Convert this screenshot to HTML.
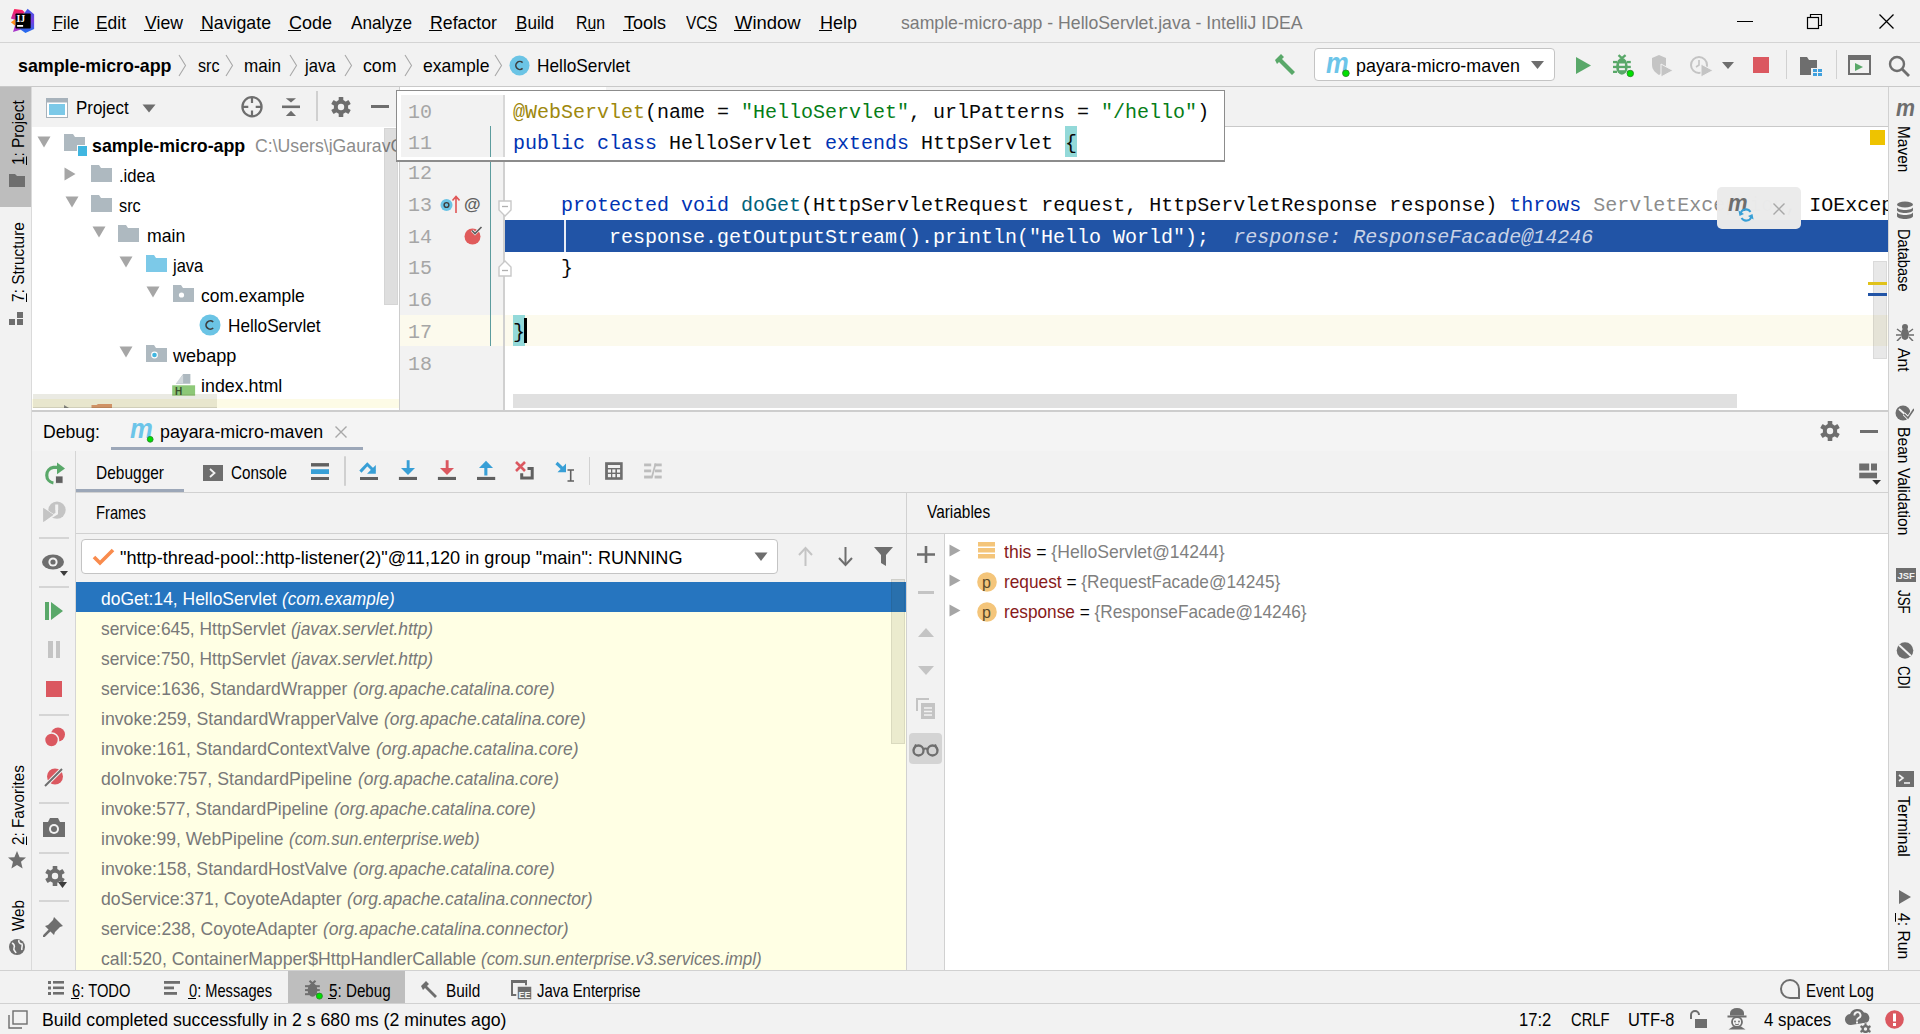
<!DOCTYPE html><html><head><meta charset="utf-8"><style>
*{margin:0;padding:0;box-sizing:border-box}
html,body{width:1920px;height:1034px;overflow:hidden;background:#f2f2f2;position:relative}
body>div,body>svg{position:absolute}
.t{position:absolute;white-space:pre;font-family:"Liberation Sans",sans-serif}
.c{position:absolute;white-space:pre;font-family:"Liberation Mono",monospace;font-size:20px;line-height:20px;color:#080808}
u{text-decoration:underline;text-underline-offset:2px;text-decoration-thickness:1px}
</style></head><body><div style="left:0px;top:0px;width:1920px;height:42px;background:#f2f2f2;"></div>
<div style="left:0px;top:42px;width:1920px;height:1px;background:#d4d4d4;"></div>
<div style="left:0px;top:86px;width:1920px;height:1px;background:#c9c9c9;"></div>
<div style="left:0px;top:87px;width:31px;height:883px;background:#f2f2f2;"></div>
<div style="left:31px;top:87px;width:1px;height:883px;background:#dadada;"></div>
<div style="left:0px;top:87px;width:31px;height:120px;background:#bdbdbd;"></div>
<div style="left:32px;top:87px;width:367px;height:40px;background:#f2f2f2;"></div>
<div style="left:32px;top:127px;width:367px;height:283px;background:#ffffff;"></div>
<div style="left:399px;top:87px;width:1px;height:323px;background:#cdcdcd;"></div>
<div style="left:400px;top:87px;width:1489px;height:323px;background:#ffffff;"></div>
<div style="left:606px;top:87px;width:1283px;height:39px;background:#f2f2f2;"></div>
<div style="left:606px;top:126px;width:1283px;height:1px;background:#c9c9c9;"></div>
<div style="left:1889px;top:87px;width:31px;height:883px;background:#f2f2f2;"></div>
<div style="left:1888px;top:87px;width:1px;height:883px;background:#d1d1d1;"></div>
<div style="left:32px;top:412px;width:1857px;height:558px;background:#f2f2f2;"></div>
<div style="left:32px;top:412px;width:1857px;height:39px;background:#f4f4f4;"></div>
<div style="left:32px;top:410px;width:1857px;height:2px;background:#cdcdcd;"></div>
<div style="left:0px;top:1003px;width:1920px;height:1px;background:#d1d1d1;"></div>
<div style="left:0px;top:970px;width:1920px;height:1px;background:#d1d1d1;"></div>
<div style="left:1888px;top:87px;width:1px;height:883px;background:#d1d1d1;"></div>
<svg style="position:absolute;left:0px;top:0px;" width="40" height="40" viewBox="0 0 40 40">
<defs><linearGradient id="lgb" x1="0" y1="0" x2="0" y2="1"><stop offset="0" stop-color="#3c5be8"/><stop offset="0.5" stop-color="#7a3fe0"/><stop offset="1" stop-color="#1b6ff0"/></linearGradient>
<linearGradient id="lgp" x1="0" y1="0" x2="0" y2="1"><stop offset="0" stop-color="#ff1d5a"/><stop offset="1" stop-color="#c02fa8"/></linearGradient></defs>
<polygon points="14.3,9 22.3,10 24.8,12.4 15.5,20 10.9,18.6" fill="url(#lgp)"/>
<polygon points="10.9,22.3 15.5,19 15.5,26" fill="#ff8a1a"/>
<polygon points="13,31.9 15.2,25 21.1,29.5" fill="#a633c9"/>
<polygon points="27.6,8.7 34.1,14.3 34.1,29.1 25.4,32.9 19,28.5 24.8,12.4" fill="url(#lgb)"/>
<rect x="15.5" y="13.4" width="15.2" height="15.1" rx="0.8" fill="#000"/>
<rect x="17.1" y="25" width="6" height="1.8" fill="#fff"/>
<text x="16.6" y="22" font-family="Liberation Serif" font-weight="bold" font-size="9.6" fill="#fff" textLength="8.6" lengthAdjust="spacingAndGlyphs">IJ</text>
</svg>
<div class="t" style="left:52.50px;top:12.91px;font-size:19px;line-height:19px;color:#000;transform:scaleX(0.8658);transform-origin:0 0;">File</div>
<div style="left:51.5px;top:29.9px;width:10.0px;height:1.2px;background:#000;"></div>
<div class="t" style="left:96.00px;top:12.91px;font-size:19px;line-height:19px;color:#000;transform:scaleX(0.9164);transform-origin:0 0;">Edit</div>
<div style="left:95.0px;top:29.9px;width:11.6px;height:1.2px;background:#000;"></div>
<div class="t" style="left:145.00px;top:12.91px;font-size:19px;line-height:19px;color:#000;transform:scaleX(0.9294);transform-origin:0 0;">View</div>
<div style="left:144.0px;top:29.9px;width:11.8px;height:1.2px;background:#000;"></div>
<div class="t" style="left:201.00px;top:12.91px;font-size:19px;line-height:19px;color:#000;transform:scaleX(0.9334);transform-origin:0 0;">Navigate</div>
<div style="left:200.0px;top:29.9px;width:12.8px;height:1.2px;background:#000;"></div>
<div class="t" style="left:289.00px;top:12.91px;font-size:19px;line-height:19px;color:#000;transform:scaleX(0.9465);transform-origin:0 0;">Code</div>
<div style="left:288.0px;top:29.9px;width:13.0px;height:1.2px;background:#000;"></div>
<div class="t" style="left:351.00px;top:12.91px;font-size:19px;line-height:19px;color:#000;transform:scaleX(0.9023);transform-origin:0 0;">Analyze</div>
<div style="left:392.9px;top:29.9px;width:8.6px;height:1.2px;background:#000;"></div>
<div class="t" style="left:430.00px;top:12.91px;font-size:19px;line-height:19px;color:#000;transform:scaleX(0.9331);transform-origin:0 0;">Refactor</div>
<div style="left:429.0px;top:29.9px;width:12.8px;height:1.2px;background:#000;"></div>
<div class="t" style="left:516.00px;top:12.91px;font-size:19px;line-height:19px;color:#000;transform:scaleX(0.8993);transform-origin:0 0;">Build</div>
<div style="left:515.0px;top:29.9px;width:11.4px;height:1.2px;background:#000;"></div>
<div class="t" style="left:576.00px;top:12.91px;font-size:19px;line-height:19px;color:#000;transform:scaleX(0.8322);transform-origin:0 0;">Run</div>
<div style="left:586.4px;top:29.9px;width:8.8px;height:1.2px;background:#000;"></div>
<div class="t" style="left:624.00px;top:12.91px;font-size:19px;line-height:19px;color:#000;transform:scaleX(0.9471);transform-origin:0 0;">Tools</div>
<div style="left:623.0px;top:29.9px;width:11.0px;height:1.2px;background:#000;"></div>
<div class="t" style="left:686.00px;top:12.91px;font-size:19px;line-height:19px;color:#000;transform:scaleX(0.8064);transform-origin:0 0;">VCS</div>
<div style="left:706.3px;top:29.9px;width:10.2px;height:1.2px;background:#000;"></div>
<div class="t" style="left:735.00px;top:12.91px;font-size:19px;line-height:19px;color:#000;transform:scaleX(0.9723);transform-origin:0 0;">Window</div>
<div style="left:734.0px;top:29.9px;width:17.4px;height:1.2px;background:#000;"></div>
<div class="t" style="left:820.00px;top:12.91px;font-size:19px;line-height:19px;color:#000;transform:scaleX(0.9467);transform-origin:0 0;">Help</div>
<div style="left:819.0px;top:29.9px;width:13.0px;height:1.2px;background:#000;"></div>
<div class="t" style="left:901.00px;top:12.91px;font-size:19px;line-height:19px;color:#7b7b7b;transform:scaleX(0.9297);transform-origin:0 0;">sample-micro-app - HelloServlet.java - IntelliJ IDEA</div>
<div style="left:1737px;top:21px;width:16px;height:1.2px;background:#000;"></div>
<svg style="position:absolute;left:1806px;top:13px;" width="18" height="17" viewBox="0 0 18 17"><rect x="1.5" y="4.5" width="11" height="11" fill="none" stroke="#000" stroke-width="1.2"/><path d="M4.5 4.5V1.5H15.5V12.5H12.5" fill="none" stroke="#000" stroke-width="1.2"/></svg>
<svg style="position:absolute;left:1878px;top:13px;" width="18" height="17" viewBox="0 0 18 17"><path d="M1.5 1.5L15.5 15.5M15.5 1.5L1.5 15.5" stroke="#000" stroke-width="1.3"/></svg>
<div class="t" style="left:18.00px;top:55.91px;font-size:19px;line-height:19px;color:#000;font-weight:bold;transform:scaleX(0.9380);transform-origin:0 0;">sample-micro-app</div>
<svg style="position:absolute;left:178px;top:54px;" width="9" height="23" viewBox="0 0 9 23"><path d="M1 1L7.5 11.5L1 22" fill="none" stroke="#a8a8a8" stroke-width="1.1"/></svg>
<svg style="position:absolute;left:225px;top:54px;" width="9" height="23" viewBox="0 0 9 23"><path d="M1 1L7.5 11.5L1 22" fill="none" stroke="#a8a8a8" stroke-width="1.1"/></svg>
<svg style="position:absolute;left:289px;top:54px;" width="9" height="23" viewBox="0 0 9 23"><path d="M1 1L7.5 11.5L1 22" fill="none" stroke="#a8a8a8" stroke-width="1.1"/></svg>
<svg style="position:absolute;left:344px;top:54px;" width="9" height="23" viewBox="0 0 9 23"><path d="M1 1L7.5 11.5L1 22" fill="none" stroke="#a8a8a8" stroke-width="1.1"/></svg>
<svg style="position:absolute;left:404px;top:54px;" width="9" height="23" viewBox="0 0 9 23"><path d="M1 1L7.5 11.5L1 22" fill="none" stroke="#a8a8a8" stroke-width="1.1"/></svg>
<svg style="position:absolute;left:494px;top:54px;" width="9" height="23" viewBox="0 0 9 23"><path d="M1 1L7.5 11.5L1 22" fill="none" stroke="#a8a8a8" stroke-width="1.1"/></svg>
<div class="t" style="left:197.50px;top:55.91px;font-size:19px;line-height:19px;color:#000;transform:scaleX(0.8489);transform-origin:0 0;">src</div>
<div class="t" style="left:244.00px;top:55.91px;font-size:19px;line-height:19px;color:#000;transform:scaleX(0.8982);transform-origin:0 0;">main</div>
<div class="t" style="left:305.42px;top:55.91px;font-size:19px;line-height:19px;color:#000;transform:scaleX(0.8772);transform-origin:0 0;">java</div>
<div class="t" style="left:362.50px;top:55.91px;font-size:19px;line-height:19px;color:#000;transform:scaleX(0.9334);transform-origin:0 0;">com</div>
<div class="t" style="left:422.50px;top:55.91px;font-size:19px;line-height:19px;color:#000;transform:scaleX(0.9259);transform-origin:0 0;">example</div>
<svg style="position:absolute;left:509px;top:55px;" width="21" height="21" viewBox="0 0 21 21"><circle cx="10.5" cy="10.5" r="10" fill="#6bc4e5"/><path d="M13.6 7.6A4 4 0 1 0 13.6 13.4" fill="none" stroke="#3d3d3d" stroke-width="1.6"/></svg>
<div class="t" style="left:537.00px;top:55.91px;font-size:19px;line-height:19px;color:#000;transform:scaleX(0.9079);transform-origin:0 0;">HelloServlet</div>
<svg style="position:absolute;left:1272px;top:52px;" width="26" height="26" viewBox="0 0 26 26"><path d="M3 8L9 2L12 5L10 7L23 20L20 23L7 10L5 12Z" fill="#59a869"/></svg>
<div style="left:1314px;top:48px;width:241px;height:33px;background:#ffffff;border:1px solid #c4c4c4;border-radius:4px;"></div>
<svg style="position:absolute;left:1321.5px;top:53px;" width="36" height="29" viewBox="0 0 36 29"><g transform="translate(4,4)"><text x="0" y="15.60" font-family="Liberation Sans" font-style="italic" font-weight="bold" font-size="29.00" fill="#6cc5e9" transform="translate(0.0,0) scale(0.877,1) skewX(0)" >m</text></g><circle cx="23.90" cy="20.30" r="3.3" fill="#00e000" stroke="#2a8a2a" stroke-width="0.9"/></svg>
<div class="t" style="left:1355.50px;top:56.41px;font-size:19px;line-height:19px;color:#000;transform:scaleX(0.9413);transform-origin:0 0;">payara-micro-maven</div>
<svg style="position:absolute;left:1530px;top:60px;" width="15" height="10" viewBox="0 0 15 10"><path d="M1 1H14L7.5 9Z" fill="#6e6e6e"/></svg>
<svg style="position:absolute;left:1575px;top:56px;" width="17" height="19" viewBox="0 0 17 19"><path d="M1 1L16 9.5L1 18Z" fill="#59a869"/></svg>
<svg style="position:absolute;left:1605px;top:48px;" width="32" height="32" viewBox="0 0 32 32"><g fill="#59a869"><path d="M13.5 7.2L16.9 10.2L20.6 7.2" fill="none" stroke="#59a869" stroke-width="2.3"/>
<ellipse cx="16.9" cy="18.4" rx="5.8" ry="8.4"/>
<rect x="8" y="12.9" width="4" height="2.3"/><rect x="8" y="17.8" width="4" height="2.3"/><rect x="8" y="22.7" width="4" height="2.3"/>
<rect x="21.8" y="12.9" width="4" height="2.3"/><rect x="21.8" y="17.8" width="4" height="2.3"/><rect x="21.8" y="22.7" width="4" height="2.3"/></g>
<rect x="14.1" y="15.5" width="5.8" height="2.3" fill="#f2f2f2"/><rect x="14.1" y="20.1" width="5.8" height="2.1" fill="#f2f2f2"/><circle cx="25.3" cy="25.5" r="3.2" fill="#00e000" stroke="#2a8a2a" stroke-width="0.9"/></svg>
<svg style="position:absolute;left:1650px;top:55px;" width="24" height="22" viewBox="0 0 24 22"><path d="M2 3L9 0L16 3V10C16 15 12 18 9 20C6 18 2 15 2 10Z" fill="#c4c4c4"/><path d="M11 9L23 15.5L11 22Z" fill="#c4c4c4" stroke="#f2f2f2" stroke-width="1"/></svg>
<svg style="position:absolute;left:1690px;top:55px;" width="24" height="22" viewBox="0 0 24 22"><circle cx="9" cy="10" r="8" fill="none" stroke="#c4c4c4" stroke-width="2"/><path d="M9 5V10L6 12" fill="none" stroke="#c4c4c4" stroke-width="1.6"/><path d="M11 9L23 15.5L11 22Z" fill="#c4c4c4" stroke="#f2f2f2" stroke-width="1"/></svg>
<svg style="position:absolute;left:1721px;top:61px;" width="14" height="9" viewBox="0 0 14 9"><path d="M1 1H13L7 8Z" fill="#6e6e6e"/></svg>
<div style="left:1753px;top:57px;width:16px;height:16px;background:#db5860;"></div>
<div style="left:1786px;top:50px;width:1px;height:29px;background:#d1d1d1;"></div>
<svg style="position:absolute;left:1799px;top:56px;" width="24" height="20" viewBox="0 0 24 20"><path d="M1 1H8L10 4H18V12H12V19H1Z" fill="#6e6e6e"/><rect x="14" y="13" width="4" height="3" fill="#40a0dd"/><rect x="19" y="13" width="4" height="3" fill="#40a0dd"/><rect x="14" y="17" width="4" height="3" fill="#40a0dd"/><rect x="19" y="17" width="4" height="3" fill="#40a0dd"/></svg>
<div style="left:1836px;top:50px;width:1px;height:29px;background:#d1d1d1;"></div>
<svg style="position:absolute;left:1848px;top:55px;" width="23" height="20" viewBox="0 0 23 20"><rect x="1" y="1" width="21" height="18" fill="none" stroke="#6e6e6e" stroke-width="2"/><rect x="1" y="1" width="21" height="4" fill="#6e6e6e"/><path d="M7 8L15 12L7 16Z" fill="#59a869"/></svg>
<svg style="position:absolute;left:1888px;top:55px;" width="23" height="22" viewBox="0 0 23 22"><circle cx="9" cy="9" r="7" fill="none" stroke="#6e6e6e" stroke-width="2.4"/><path d="M14 14L21 21" stroke="#6e6e6e" stroke-width="2.8"/></svg>
<div class="t" style="left:11.46px;top:164.50px;font-size:16.7px;line-height:16.7px;color:#000;transform-origin:0 0;transform:rotate(-90deg) scaleX(0.9172);"><u>1</u>: Project</div>
<svg style="position:absolute;left:8px;top:173px;" width="18" height="15" viewBox="0 0 18 15"><path d="M1 1H7L9 3H17V14H1Z" fill="#6e6e6e"/></svg>
<div class="t" style="left:11.46px;top:302.00px;font-size:16.7px;line-height:16.7px;color:#000;transform-origin:0 0;transform:rotate(-90deg) scaleX(0.9268);"><u>7</u>: Structure</div>
<svg style="position:absolute;left:8px;top:311px;" width="18" height="15" viewBox="0 0 18 15"><rect x="9" y="1" width="6" height="6" fill="#6e6e6e"/><rect x="1" y="8" width="6" height="6" fill="#6e6e6e"/><rect x="9" y="8" width="6" height="6" fill="#6e6e6e"/></svg>
<div class="t" style="left:11.46px;top:845.00px;font-size:16.7px;line-height:16.7px;color:#000;transform-origin:0 0;transform:rotate(-90deg) scaleX(0.9170);"><u>2</u>: Favorites</div>
<svg style="position:absolute;left:7px;top:850px;" width="20" height="20" viewBox="0 0 20 20"><path d="M10 1L12.6 7.2L19 7.6L14 11.8L15.6 18.6L10 15L4.4 18.6L6 11.8L1 7.6L7.4 7.2Z" fill="#6e6e6e"/></svg>
<div class="t" style="left:11.46px;top:931.00px;font-size:16.7px;line-height:16.7px;color:#000;transform-origin:0 0;transform:rotate(-90deg) scaleX(0.9108);">Web</div>
<svg style="position:absolute;left:8px;top:938px;" width="18" height="18" viewBox="0 0 18 18"><circle cx="9" cy="9" r="8" fill="#6e6e6e"/><path d="M4 5C6 6 7 8 6 10C5 12 7 13 8 15M11 2C10 4 12 6 14 6C15 8 13 10 14 12" fill="none" stroke="#f2f2f2" stroke-width="1.6"/></svg>
<svg style="position:absolute;left:46px;top:98px;" width="22" height="20" viewBox="0 0 22 20"><rect x="0.5" y="0.5" width="21" height="19" fill="#ffffff" stroke="#a7b2bb"/><rect x="0.5" y="0.5" width="21" height="4" fill="#a7b2bb"/><rect x="3" y="6" width="16" height="11" fill="#7cc9e8"/></svg>
<div class="t" style="left:75.60px;top:98.31px;font-size:19px;line-height:19px;color:#000;transform:scaleX(0.8913);transform-origin:0 0;">Project</div>
<svg style="position:absolute;left:142px;top:104px;" width="14" height="9" viewBox="0 0 14 9"><path d="M0.5 0.5H13.5L7 8.5Z" fill="#6e6e6e"/></svg>
<svg style="position:absolute;left:230px;top:88px;" width="80" height="38" viewBox="0 0 80 38"><circle cx="22" cy="18.8" r="9.6" fill="none" stroke="#6e6e6e" stroke-width="2.2"/><path d="M22 9.5V15M22 22.5V28M12.5 18.8H18.3M25.7 18.8H31.5" stroke="#6e6e6e" stroke-width="2.2"/><path d="M55.8 10.2H66L61 14.6Z" fill="#6e6e6e"/><rect x="52" y="17.5" width="18" height="2.6" fill="#6e6e6e"/><path d="M55.8 27.9H66L61 22.8Z" fill="#6e6e6e"/></svg>
<div style="left:315.5px;top:91px;width:2px;height:30px;background:#d0d0d0;"></div>
<svg style="position:absolute;left:331px;top:97px;" width="20" height="20" viewBox="0 0 20 20"><circle cx="10" cy="10" r="7.2" fill="#6e6e6e"/><rect x="7.7" y="0" width="4.6" height="6" rx="0.6" fill="#6e6e6e" transform="rotate(0 10 10)"/><rect x="7.7" y="0" width="4.6" height="6" rx="0.6" fill="#6e6e6e" transform="rotate(60 10 10)"/><rect x="7.7" y="0" width="4.6" height="6" rx="0.6" fill="#6e6e6e" transform="rotate(120 10 10)"/><rect x="7.7" y="0" width="4.6" height="6" rx="0.6" fill="#6e6e6e" transform="rotate(180 10 10)"/><rect x="7.7" y="0" width="4.6" height="6" rx="0.6" fill="#6e6e6e" transform="rotate(240 10 10)"/><rect x="7.7" y="0" width="4.6" height="6" rx="0.6" fill="#6e6e6e" transform="rotate(300 10 10)"/><circle cx="10" cy="10" r="3.2" fill="#f2f2f2"/></svg>
<div style="left:371px;top:105px;width:18px;height:3px;background:#6e6e6e;"></div>
<svg style="position:absolute;left:37px;top:136px;" width="14" height="12" viewBox="0 0 14 12"><path d="M0.5 0.5H13.5L7 11.5Z" fill="#a6a6a6"/></svg>
<svg style="position:absolute;left:64px;top:134px;" width="23" height="22" viewBox="0 0 23 22"><path d="M0 0H9L11 3H21V17H0Z" fill="#aeb9c0"/><rect x="13" y="11" width="10" height="11" fill="#ffffff"/><rect x="14" y="12" width="9" height="10" fill="#40b6e0"/></svg>
<div class="t" style="left:92.20px;top:135.91px;font-size:19px;line-height:19px;color:#000;font-weight:bold;transform:scaleX(0.9362);transform-origin:0 0;">sample-micro-app</div>
<div class="t" style="left:255.00px;top:135.91px;font-size:19px;line-height:19px;color:#8c8c8c;transform:scaleX(0.9300);transform-origin:0 0;width:153.8px;overflow:hidden;">C:\Users\jGauravGupta</div>
<svg style="position:absolute;left:64px;top:167px;" width="12" height="14" viewBox="0 0 12 14"><path d="M0.5 0.5V13.5L11.5 7Z" fill="#a6a6a6"/></svg>
<svg style="position:absolute;left:91px;top:165px;" width="21" height="17" viewBox="0 0 21 17"><path d="M0 0H8L10 3H21V17H0Z" fill="#aeb9c0"/></svg>
<div class="t" style="left:119.30px;top:165.91px;font-size:19px;line-height:19px;color:#000;transform:scaleX(0.8760);transform-origin:0 0;">.idea</div>
<svg style="position:absolute;left:65px;top:196px;" width="14" height="12" viewBox="0 0 14 12"><path d="M0.5 0.5H13.5L7 11.5Z" fill="#a6a6a6"/></svg>
<svg style="position:absolute;left:91px;top:195px;" width="21" height="17" viewBox="0 0 21 17"><path d="M0 0H8L10 3H21V17H0Z" fill="#aeb9c0"/></svg>
<div class="t" style="left:119.30px;top:195.91px;font-size:19px;line-height:19px;color:#000;transform:scaleX(0.8568);transform-origin:0 0;">src</div>
<svg style="position:absolute;left:92px;top:226px;" width="14" height="12" viewBox="0 0 14 12"><path d="M0.5 0.5H13.5L7 11.5Z" fill="#a6a6a6"/></svg>
<svg style="position:absolute;left:118px;top:225px;" width="21" height="17" viewBox="0 0 21 17"><path d="M0 0H8L10 3H21V17H0Z" fill="#aeb9c0"/></svg>
<div class="t" style="left:146.50px;top:225.91px;font-size:19px;line-height:19px;color:#000;transform:scaleX(0.9298);transform-origin:0 0;">main</div>
<svg style="position:absolute;left:119px;top:256px;" width="14" height="12" viewBox="0 0 14 12"><path d="M0.5 0.5H13.5L7 11.5Z" fill="#a6a6a6"/></svg>
<svg style="position:absolute;left:145.5px;top:255px;" width="21" height="17" viewBox="0 0 21 17"><path d="M0 0H8L10 3H21V17H0Z" fill="#7cc9e8"/></svg>
<div class="t" style="left:173.01px;top:255.91px;font-size:19px;line-height:19px;color:#000;transform:scaleX(0.8687);transform-origin:0 0;">java</div>
<svg style="position:absolute;left:146px;top:286px;" width="14" height="12" viewBox="0 0 14 12"><path d="M0.5 0.5H13.5L7 11.5Z" fill="#a6a6a6"/></svg>
<svg style="position:absolute;left:172.6px;top:285px;" width="21" height="17" viewBox="0 0 21 17"><path d="M0 0H8L10 3H21V17H0Z" fill="#aeb9c0"/><circle cx="8.5" cy="10" r="2.6" fill="#ffffff"/></svg>
<div class="t" style="left:200.70px;top:285.91px;font-size:19px;line-height:19px;color:#000;transform:scaleX(0.9178);transform-origin:0 0;">com.example</div>
<svg style="position:absolute;left:199px;top:314px;" width="22" height="22" viewBox="0 0 22 22"><circle cx="11" cy="11" r="10.5" fill="#6bc4e5"/><path d="M14.2 8A4.2 4.2 0 1 0 14.2 14" fill="none" stroke="#3d3d3d" stroke-width="1.7"/></svg>
<div class="t" style="left:227.80px;top:315.91px;font-size:19px;line-height:19px;color:#000;transform:scaleX(0.9040);transform-origin:0 0;">HelloServlet</div>
<svg style="position:absolute;left:119px;top:346px;" width="14" height="12" viewBox="0 0 14 12"><path d="M0.5 0.5H13.5L7 11.5Z" fill="#a6a6a6"/></svg>
<svg style="position:absolute;left:145.5px;top:345px;" width="21" height="17" viewBox="0 0 21 17"><path d="M0 0H8L10 3H21V17H0Z" fill="#aeb9c0"/><circle cx="8.5" cy="10" r="3.4" fill="#ffffff"/><circle cx="8.5" cy="10" r="2.3" fill="#40b6e0"/></svg>
<div class="t" style="left:173.04px;top:345.91px;font-size:19px;line-height:19px;color:#000;transform:scaleX(0.9520);transform-origin:0 0;">webapp</div>
<svg style="position:absolute;left:170px;top:372px;" width="28" height="26" viewBox="0 0 28 26"><path d="M13.1 1.9H20.4V11.75H5.8Z" fill="#aeb9c0"/><path d="M5.8 11.2L13.1 2.8V11.2Z" fill="#ffffff" opacity="0.45"/><rect x="2.2" y="13.3" width="22.9" height="10.4" fill="#8dc878"/><text x="5" y="22.6" font-family="Liberation Sans" font-weight="bold" font-size="10" fill="#3a4f2c">H</text></svg>
<div class="t" style="left:200.70px;top:375.91px;font-size:19px;line-height:19px;color:#000;transform:scaleX(0.9388);transform-origin:0 0;">index.html</div>
<div style="left:32px;top:399px;width:367px;height:9px;background:#fdfbe6;"></div>
<svg style="position:absolute;left:88px;top:404px;" width="24" height="4" viewBox="0 0 24 4"><path d="M3.5 4V1H8.5L10 0H24V4Z" fill="#e09a6f"/></svg>
<svg style="position:absolute;left:60px;top:405px;" width="10" height="3" viewBox="0 0 10 3"><path d="M4 0L9 3H4Z" fill="#8c8c8c"/></svg>
<div style="left:33px;top:394px;width:184px;height:14px;background:rgba(90,90,40,0.13);border-bottom:1px solid rgba(0,0,0,0.1);"></div>
<div style="left:384px;top:128px;width:14px;height:177px;background:rgba(0,0,0,0.13);border:1px solid rgba(0,0,0,0.04)"></div>
<div style="left:400px;top:127px;width:103px;height:283px;background:#f2f2f2;"></div>
<div style="left:400px;top:315px;width:1488px;height:31px;background:#fcfaed;"></div>
<div style="left:503px;top:127px;width:2px;height:283px;background:#d0d0d0;"></div>
<div style="left:489.5px;top:127px;width:1.6px;height:219px;background:#5c9c9e;"></div>
<div style="left:505px;top:220px;width:1383px;height:32px;background:#2154a6;"></div>
<div style="left:564px;top:220px;width:2px;height:32px;background:#e8ecf5;"></div>
<div class="c" style="left:408px;top:164.18px;"><span style="color:#a6a6a6">12</span></div>
<div class="c" style="left:408px;top:195.93px;"><span style="color:#a6a6a6">13</span></div>
<div class="c" style="left:408px;top:227.68px;"><span style="color:#a6a6a6">14</span></div>
<div class="c" style="left:408px;top:259.43px;"><span style="color:#a6a6a6">15</span></div>
<div class="c" style="left:408px;top:291.18px;"><span style="color:#a6a6a6">16</span></div>
<div class="c" style="left:408px;top:322.93px;"><span style="color:#a6a6a6">17</span></div>
<div class="c" style="left:408px;top:354.68px;"><span style="color:#a6a6a6">18</span></div>
<svg style="position:absolute;left:498px;top:200px;" width="15" height="17" viewBox="0 0 15 17"><path d="M1 1H13V10L7 16L1 10Z" fill="#ffffff" stroke="#c8c8c8" stroke-width="1.4"/><path d="M4 6.5H10" stroke="#b0b0b0" stroke-width="1.3"/></svg>
<svg style="position:absolute;left:498px;top:260px;" width="15" height="17" viewBox="0 0 15 17"><path d="M1 16H13V7L7 1L1 7Z" fill="#ffffff" stroke="#c8c8c8" stroke-width="1.4"/><path d="M4 10.5H10" stroke="#b0b0b0" stroke-width="1.3"/></svg>
<svg style="position:absolute;left:440px;top:194px;" width="20" height="20" viewBox="0 0 20 20"><circle cx="6.5" cy="11" r="6" fill="#6bc4e5"/><circle cx="6.5" cy="11" r="2.4" fill="none" stroke="#3d3d3d" stroke-width="1.4"/><path d="M16 19V3M12.5 6.5L16 2.5L19.5 6.5" fill="none" stroke="#e05555" stroke-width="1.6"/></svg>
<svg style="position:absolute;left:464px;top:196px;" width="18" height="17" viewBox="0 0 18 17"><text x="0" y="14" font-family="Liberation Sans" font-size="17" font-weight="bold" fill="#606060">@</text></svg>
<svg style="position:absolute;left:464px;top:224.5px;" width="19" height="20" viewBox="0 0 19 20"><circle cx="8.5" cy="11.5" r="8" fill="#e05b5b"/><path d="M8 5.5L11 8.5L17.5 2" fill="none" stroke="#f2f2f2" stroke-width="3"/><path d="M8 5.5L11 8.5L17.5 2" fill="none" stroke="#5e5e5e" stroke-width="1.6"/></svg>
<div class="c" style="left:561px;top:195.93px;width:1327px;overflow:hidden;"><span style="color:#0033b3">protected</span><span style="color:#080808"> </span><span style="color:#0033b3">void</span><span style="color:#080808"> </span><span style="color:#00627a">doGet</span><span style="color:#080808">(HttpServletRequest request, HttpServletResponse response) </span><span style="color:#0033b3">throws</span><span style="color:#080808"> </span><span style="color:#8c8c8c">ServletException</span><span style="color:#080808">, IOException {</span></div>
<div class="c" style="left:609px;top:227.68px;"><span style="color:#ffffff">response.getOutputStream().println(&quot;Hello World&quot;);</span><span style="color:#ffffff">  </span><span style="color:#c9d3e6;font-style:italic">response: ResponseFacade@14246</span></div>
<div class="c" style="left:561px;top:259.43px;"><span style="color:#080808">}</span></div>
<div style="left:513px;top:315px;width:12px;height:31px;background:#93d9d9;"></div>
<div class="c" style="left:513px;top:322.93px;"><span style="color:#080808">}</span></div>
<div style="left:524px;top:318px;width:2.5px;height:25px;background:#000000;"></div>
<div style="left:1870px;top:130px;width:15px;height:15px;background:#eec300;"></div>
<div style="left:1873px;top:261px;width:14px;height:98px;background:rgba(0,0,0,0.09);border:1px solid rgba(0,0,0,0.06);"></div>
<div style="left:1868px;top:282px;width:19px;height:3px;background:#e0c21a;"></div>
<div style="left:1868px;top:293px;width:19px;height:3px;background:#2154a6;"></div>
<div style="left:513px;top:394px;width:1224px;height:14px;background:#e0e0e0;"></div>
<div style="left:1717px;top:187px;width:84px;height:42px;background:rgba(235,235,235,0.985);border-radius:5px;"></div>
<svg style="position:absolute;left:1724px;top:193.8px;" width="33" height="26" viewBox="0 0 33 26"><g transform="translate(4,4)"><text x="0" y="12.60" font-family="Liberation Sans" font-style="italic" font-weight="bold" font-size="23.42" fill="#6e6e6e" transform="translate(0.0,0) scale(0.941,1) skewX(0)" >m</text></g></svg>
<svg style="position:absolute;left:1738px;top:207px;" width="16" height="16" viewBox="0 0 16 16"><path d="M2.5 6.5A5.5 5.5 0 0 1 12.5 5" fill="none" stroke="#389fd6" stroke-width="2"/><path d="M13.5 9.5A5.5 5.5 0 0 1 3.5 11" fill="none" stroke="#389fd6" stroke-width="2"/><path d="M0.5 3.5L1.5 9L6 7Z" fill="#389fd6"/><path d="M15.5 12.5L14.5 7L10 9Z" fill="#389fd6"/></svg>
<svg style="position:absolute;left:1772px;top:202px;" width="14" height="14" viewBox="0 0 14 14"><path d="M1.5 1.5L12.5 12.5M12.5 1.5L1.5 12.5" stroke="#a8a8a8" stroke-width="1.4"/></svg>
<div style="left:396px;top:90px;width:829px;height:72px;background:#ffffff;border:1px solid #8c8c8c;border-bottom-width:2px;"></div>
<div style="left:401px;top:95px;width:104px;height:62px;background:#f2f2f2;"></div>
<div style="left:503px;top:95px;width:2px;height:62px;background:#d8d8d8;"></div>
<div style="left:489.5px;top:126px;width:1.6px;height:31px;background:#5c9c9e;"></div>
<div class="c" style="left:408px;top:102.68px;"><span style="color:#a6a6a6">10</span></div>
<div class="c" style="left:408px;top:133.68px;"><span style="color:#a6a6a6">11</span></div>
<div class="c" style="left:513px;top:102.68px;"><span style="color:#9e880d">@WebServlet</span><span style="color:#080808">(name = </span><span style="color:#067d17">&quot;HelloServlet&quot;</span><span style="color:#080808">, urlPatterns = </span><span style="color:#067d17">&quot;/hello&quot;</span><span style="color:#080808">)</span></div>
<div style="left:1065px;top:126px;width:12px;height:31px;background:#93d9d9;"></div>
<div class="c" style="left:513px;top:133.68px;"><span style="color:#0033b3">public</span><span style="color:#080808"> </span><span style="color:#0033b3">class</span><span style="color:#080808"> HelloServlet </span><span style="color:#0033b3">extends</span><span style="color:#080808"> HttpServlet {</span></div>
<div class="t" style="left:42.90px;top:421.61px;font-size:19px;line-height:19px;color:#000;transform:scaleX(0.9286);transform-origin:0 0;">Debug:</div>
<svg style="position:absolute;left:126px;top:419.3px;" width="36" height="29" viewBox="0 0 36 29"><g transform="translate(4,4)"><text x="0" y="15.20" font-family="Liberation Sans" font-style="italic" font-weight="bold" font-size="28.25" fill="#6cc5e9" transform="translate(0.0,0) scale(0.908,1) skewX(0)" >m</text></g><circle cx="24.20" cy="20.30" r="2.9" fill="#00e000" stroke="#2a8a2a" stroke-width="0.9"/></svg>
<div class="t" style="left:159.80px;top:421.91px;font-size:19px;line-height:19px;color:#000;transform:scaleX(0.9367);transform-origin:0 0;">payara-micro-maven</div>
<svg style="position:absolute;left:334px;top:425px;" width="14" height="14" viewBox="0 0 14 14"><path d="M1.5 1.5L12.5 12.5M12.5 1.5L1.5 12.5" stroke="#a8a8a8" stroke-width="1.4"/></svg>
<div style="left:111px;top:447px;width:252px;height:3px;background:#9ca7b8;"></div>
<svg style="position:absolute;left:1820px;top:421px;" width="20" height="20" viewBox="0 0 20 20"><circle cx="10" cy="10" r="7.2" fill="#6e6e6e"/><rect x="7.7" y="0" width="4.6" height="6" rx="0.6" fill="#6e6e6e" transform="rotate(0 10 10)"/><rect x="7.7" y="0" width="4.6" height="6" rx="0.6" fill="#6e6e6e" transform="rotate(60 10 10)"/><rect x="7.7" y="0" width="4.6" height="6" rx="0.6" fill="#6e6e6e" transform="rotate(120 10 10)"/><rect x="7.7" y="0" width="4.6" height="6" rx="0.6" fill="#6e6e6e" transform="rotate(180 10 10)"/><rect x="7.7" y="0" width="4.6" height="6" rx="0.6" fill="#6e6e6e" transform="rotate(240 10 10)"/><rect x="7.7" y="0" width="4.6" height="6" rx="0.6" fill="#6e6e6e" transform="rotate(300 10 10)"/><circle cx="10" cy="10" r="3.2" fill="#f2f2f2"/></svg>
<div style="left:1860px;top:430px;width:18px;height:3px;background:#6e6e6e;"></div>
<div style="left:75px;top:451px;width:1px;height:519px;background:#d5d5d5;"></div>
<div class="t" style="left:96.30px;top:463.41px;font-size:19px;line-height:19px;color:#000;transform:scaleX(0.8149);transform-origin:0 0;">Debugger</div>
<div style="left:76px;top:489px;width:108px;height:3px;background:#9ca7b8;"></div>
<svg style="position:absolute;left:203px;top:465px;" width="20" height="16" viewBox="0 0 20 16"><rect x="0" y="0" width="20" height="16" fill="#6e6e6e"/><path d="M7 4L11.5 8L7 12" fill="none" stroke="#f2f2f2" stroke-width="1.8"/></svg>
<div class="t" style="left:230.60px;top:463.41px;font-size:19px;line-height:19px;color:#000;transform:scaleX(0.8019);transform-origin:0 0;">Console</div>
<svg style="position:absolute;left:300px;top:455px;" width="300" height="35" viewBox="0 0 300 35">
<rect x="11" y="8.1" width="18" height="3.4" fill="#606060"/>
<rect x="11" y="14.2" width="18" height="4.8" fill="#389fd6"/>
<rect x="11" y="22" width="18" height="3" fill="#606060"/>
<rect x="44" y="1.3" width="2" height="29.5" fill="#d0d0d0"/>
<path d="M60.4 16.6L67.3 9.3L74.5 16.5" fill="none" stroke="#389fd6" stroke-width="3"/>
<path d="M75.8 10V18.8H67Z" fill="#389fd6"/>
<rect x="60" y="22" width="18" height="3" fill="#606060"/>
<rect x="106.7" y="5.2" width="2.9" height="9" fill="#389fd6"/><path d="M101 13H115L108 20Z" fill="#389fd6"/><rect x="98.9" y="21.9" width="18.1" height="3.1" fill="#606060"/>
<rect x="145.7" y="5.2" width="2.9" height="9" fill="#db5860"/><path d="M140 13H154L147 20Z" fill="#db5860"/><rect x="137.9" y="21.9" width="18.1" height="3.1" fill="#606060"/>
<path d="M179 13H193L186 5.7Z" fill="#389fd6"/><rect x="184.3" y="12" width="3.1" height="8.5" fill="#389fd6"/><rect x="177" y="21.9" width="18.2" height="3.1" fill="#606060"/>
<path d="M216 7L225 16M225 7L216 16" stroke="#db5860" stroke-width="2.6"/>
<path d="M227.5 13.5H232.2V23H221.7V18.2" fill="none" stroke="#606060" stroke-width="3"/>
<path d="M256.5 8L263 14.2" stroke="#389fd6" stroke-width="3.2"/><path d="M266 8.5V17.3H257.5Z" fill="#389fd6"/>
<path d="M267.5 15H274M267.5 26H274M270.7 15V26" stroke="#606060" stroke-width="1.6" fill="none"/>
</svg>
<div style="left:589px;top:457px;width:1px;height:28px;background:#d1d1d1;"></div>
<svg style="position:absolute;left:598px;top:456px;" width="72" height="30" viewBox="598 456 72 30"><rect x="605.1" y="462.2" width="17.6" height="17.6" fill="#6e6e6e"/><rect x="607.9" y="465" width="12.2" height="3" fill="#f2f2f2"/><rect x="607.9" y="469.4" width="3.1" height="3.2" fill="#f2f2f2"/><rect x="607.9" y="474" width="3.1" height="3.2" fill="#f2f2f2"/><rect x="612.3" y="469.4" width="3.1" height="3.2" fill="#f2f2f2"/><rect x="612.3" y="474" width="3.1" height="3.2" fill="#f2f2f2"/><rect x="617" y="469.4" width="3.1" height="3.2" fill="#f2f2f2"/><rect x="617" y="474" width="3.1" height="3.2" fill="#f2f2f2"/><g fill="#bdbdbd"><rect x="644.1" y="463.5" width="7.1" height="2.8"/><rect x="644.1" y="469.5" width="7.1" height="2.8"/><rect x="644.1" y="475.6" width="7.6" height="2.9"/><rect x="654.4" y="463.5" width="7.3" height="2.8"/><rect x="655" y="469.5" width="6.7" height="2.8"/><rect x="654.6" y="475.6" width="7.1" height="2.9"/></g><path d="M651.6 478.3L655.6 463.6" stroke="#bdbdbd" stroke-width="1.8"/></svg>
<svg style="position:absolute;left:1855px;top:460px;" width="30" height="30" viewBox="0 0 30 30"><rect x="4.2" y="3.5" width="10" height="7" fill="#6e6e6e"/><rect x="16" y="3.5" width="6" height="7" fill="#6e6e6e"/><rect x="4.2" y="12.7" width="17.8" height="5.6" fill="#6e6e6e"/><path d="M17.2 20H26L21.6 24.8Z" fill="#333"/></svg>
<div style="left:76px;top:492px;width:1812px;height:1px;background:#d1d1d1;"></div>
<div class="t" style="left:96.30px;top:502.91px;font-size:19px;line-height:19px;color:#000;transform:scaleX(0.7750);transform-origin:0 0;">Frames</div>
<div class="t" style="left:927.40px;top:502.21px;font-size:19px;line-height:19px;color:#000;transform:scaleX(0.8110);transform-origin:0 0;">Variables</div>
<div style="left:76px;top:533px;width:1812px;height:1px;background:#d1d1d1;"></div>
<div style="left:906px;top:493px;width:1px;height:477px;background:#d1d1d1;"></div>
<div style="left:81px;top:539px;width:697px;height:35px;background:#ffffff;border:1px solid #c4c4c4;border-radius:4px;"></div>
<svg style="position:absolute;left:92px;top:548px;" width="23" height="18" viewBox="0 0 23 18"><path d="M2 9L8 15L21 2" fill="none" stroke="#f98b4d" stroke-width="3.6"/></svg>
<div class="t" style="left:120.00px;top:547.91px;font-size:19px;line-height:19px;color:#000;transform:scaleX(0.9537);transform-origin:0 0;">&quot;http-thread-pool::http-listener(2)&quot;@11,120 in group &quot;main&quot;: RUNNING</div>
<svg style="position:absolute;left:754px;top:552px;" width="14" height="10" viewBox="0 0 14 10"><path d="M0.5 0.5H13.5L7 9Z" fill="#6e6e6e"/></svg>
<svg style="position:absolute;left:797px;top:546px;" width="17" height="21" viewBox="0 0 17 21"><path d="M8.5 3V20" stroke="#c4c4c4" stroke-width="2"/><path d="M2 9L8.5 2L15 9" fill="none" stroke="#c4c4c4" stroke-width="2"/></svg>
<svg style="position:absolute;left:837px;top:546px;" width="17" height="21" viewBox="0 0 17 21"><path d="M8.5 1V18" stroke="#6e6e6e" stroke-width="2"/><path d="M2 12L8.5 19L15 12" fill="none" stroke="#6e6e6e" stroke-width="2"/></svg>
<svg style="position:absolute;left:874px;top:547px;" width="20" height="20" viewBox="0 0 20 20"><path d="M0 0H19L12 8V19L7 16V8Z" fill="#6e6e6e"/></svg>
<div style="left:76px;top:582px;width:830px;height:388px;background:#ffffe4;"></div>
<div style="left:76px;top:582px;width:830px;height:30px;background:#2675bf;"></div>
<div style="left:891px;top:579px;width:14px;height:165px;background:rgba(70,70,30,0.11);border:1px solid rgba(0,0,0,0.07);"></div>
<div class="t" style="left:101.00px;top:589.41px;font-size:19px;line-height:19px;color:#ffffff;transform:scaleX(0.9191);transform-origin:0 0;">doGet:14, HelloServlet</div>
<div class="t" style="left:282.40px;top:589.41px;font-size:19px;line-height:19px;color:#ffffff;font-style:italic;transform:scaleX(0.8970);transform-origin:0 0;">(com.example)</div>
<div class="t" style="left:101.00px;top:619.41px;font-size:19px;line-height:19px;color:#787878;transform:scaleX(0.9147);transform-origin:0 0;">service:645, HttpServlet</div>
<div class="t" style="left:291.20px;top:619.41px;font-size:19px;line-height:19px;color:#787878;font-style:italic;transform:scaleX(0.9155);transform-origin:0 0;">(javax.servlet.http)</div>
<div class="t" style="left:101.00px;top:649.41px;font-size:19px;line-height:19px;color:#787878;transform:scaleX(0.9147);transform-origin:0 0;">service:750, HttpServlet</div>
<div class="t" style="left:291.20px;top:649.41px;font-size:19px;line-height:19px;color:#787878;font-style:italic;transform:scaleX(0.9155);transform-origin:0 0;">(javax.servlet.http)</div>
<div class="t" style="left:101.00px;top:679.41px;font-size:19px;line-height:19px;color:#787878;transform:scaleX(0.9197);transform-origin:0 0;">service:1636, StandardWrapper</div>
<div class="t" style="left:353.10px;top:679.41px;font-size:19px;line-height:19px;color:#787878;font-style:italic;transform:scaleX(0.9137);transform-origin:0 0;">(org.apache.catalina.core)</div>
<div class="t" style="left:101.00px;top:709.41px;font-size:19px;line-height:19px;color:#787878;transform:scaleX(0.9312);transform-origin:0 0;">invoke:259, StandardWrapperValve</div>
<div class="t" style="left:384.40px;top:709.41px;font-size:19px;line-height:19px;color:#787878;font-style:italic;transform:scaleX(0.9137);transform-origin:0 0;">(org.apache.catalina.core)</div>
<div class="t" style="left:101.00px;top:739.41px;font-size:19px;line-height:19px;color:#787878;transform:scaleX(0.9249);transform-origin:0 0;">invoke:161, StandardContextValve</div>
<div class="t" style="left:376.00px;top:739.41px;font-size:19px;line-height:19px;color:#787878;font-style:italic;transform:scaleX(0.9174);transform-origin:0 0;">(org.apache.catalina.core)</div>
<div class="t" style="left:101.00px;top:769.41px;font-size:19px;line-height:19px;color:#787878;transform:scaleX(0.9318);transform-origin:0 0;">doInvoke:757, StandardPipeline</div>
<div class="t" style="left:357.70px;top:769.41px;font-size:19px;line-height:19px;color:#787878;font-style:italic;transform:scaleX(0.9101);transform-origin:0 0;">(org.apache.catalina.core)</div>
<div class="t" style="left:101.00px;top:799.41px;font-size:19px;line-height:19px;color:#787878;transform:scaleX(0.9196);transform-origin:0 0;">invoke:577, StandardPipeline</div>
<div class="t" style="left:334.00px;top:799.41px;font-size:19px;line-height:19px;color:#787878;font-style:italic;transform:scaleX(0.9137);transform-origin:0 0;">(org.apache.catalina.core)</div>
<div class="t" style="left:101.00px;top:829.41px;font-size:19px;line-height:19px;color:#787878;transform:scaleX(0.9212);transform-origin:0 0;">invoke:99, WebPipeline</div>
<div class="t" style="left:289.30px;top:829.41px;font-size:19px;line-height:19px;color:#787878;font-style:italic;transform:scaleX(0.8892);transform-origin:0 0;">(com.sun.enterprise.web)</div>
<div class="t" style="left:101.00px;top:859.41px;font-size:19px;line-height:19px;color:#787878;transform:scaleX(0.9306);transform-origin:0 0;">invoke:158, StandardHostValve</div>
<div class="t" style="left:353.10px;top:859.41px;font-size:19px;line-height:19px;color:#787878;font-style:italic;transform:scaleX(0.9137);transform-origin:0 0;">(org.apache.catalina.core)</div>
<div class="t" style="left:101.00px;top:889.41px;font-size:19px;line-height:19px;color:#787878;transform:scaleX(0.9297);transform-origin:0 0;">doService:371, CoyoteAdapter</div>
<div class="t" style="left:347.40px;top:889.41px;font-size:19px;line-height:19px;color:#787878;font-style:italic;transform:scaleX(0.9191);transform-origin:0 0;">(org.apache.catalina.connector)</div>
<div class="t" style="left:101.00px;top:919.41px;font-size:19px;line-height:19px;color:#787878;transform:scaleX(0.9238);transform-origin:0 0;">service:238, CoyoteAdapter</div>
<div class="t" style="left:323.30px;top:919.41px;font-size:19px;line-height:19px;color:#787878;font-style:italic;transform:scaleX(0.9191);transform-origin:0 0;">(org.apache.catalina.connector)</div>
<div class="t" style="left:101.00px;top:949.41px;font-size:19px;line-height:19px;color:#787878;transform:scaleX(0.9297);transform-origin:0 0;">call:520, ContainerMapper$HttpHandlerCallable</div>
<div class="t" style="left:481.10px;top:949.41px;font-size:19px;line-height:19px;color:#787878;font-style:italic;transform:scaleX(0.8921);transform-origin:0 0;">(com.sun.enterprise.v3.services.impl)</div>
<div style="left:944px;top:534px;width:1px;height:436px;background:#d1d1d1;"></div>
<svg style="position:absolute;left:917px;top:546px;" width="18" height="17" viewBox="0 0 18 17"><path d="M9 0V17M0 8.5H18" stroke="#6e6e6e" stroke-width="2.6"/></svg>
<div style="left:918px;top:591px;width:16px;height:2.6px;background:#c4c4c4;"></div>
<svg style="position:absolute;left:917px;top:627px;" width="18" height="11" viewBox="0 0 18 11"><path d="M1 10H17L9 1Z" fill="#c4c4c4"/></svg>
<svg style="position:absolute;left:917px;top:665px;" width="18" height="11" viewBox="0 0 18 11"><path d="M1 1H17L9 10Z" fill="#c4c4c4"/></svg>
<svg style="position:absolute;left:916px;top:698px;" width="20" height="22" viewBox="0 0 20 22"><path d="M1 13V1H13" fill="none" stroke="#c4c4c4" stroke-width="2"/><rect x="5" y="5" width="14" height="16" fill="#c4c4c4"/><path d="M8 10H16M8 13.5H16M8 17H16" stroke="#f2f2f2" stroke-width="1.4"/></svg>
<div style="left:909px;top:733px;width:33px;height:31px;background:#d4d4d4;border-radius:4px;"></div>
<svg style="position:absolute;left:910px;top:742px;" width="31" height="15" viewBox="0 0 31 15"><circle cx="8.5" cy="8.5" r="5" fill="none" stroke="#6e6e6e" stroke-width="2.3"/><circle cx="22.5" cy="8.5" r="5" fill="none" stroke="#6e6e6e" stroke-width="2.3"/><path d="M13 7.5Q15.5 5.5 18 7.5" fill="none" stroke="#6e6e6e" stroke-width="2"/><path d="M3.5 8L6 2.5M27.5 8L25 2.5" stroke="#6e6e6e" stroke-width="2"/></svg>
<div style="left:945px;top:534px;width:943px;height:436px;background:#ffffff;"></div>
<svg style="position:absolute;left:949px;top:544px;" width="12" height="13" viewBox="0 0 12 13"><path d="M0.5 0.5V12.5L11.5 6.5Z" fill="#a6a6a6"/></svg>
<svg style="position:absolute;left:949px;top:574px;" width="12" height="13" viewBox="0 0 12 13"><path d="M0.5 0.5V12.5L11.5 6.5Z" fill="#a6a6a6"/></svg>
<svg style="position:absolute;left:949px;top:604px;" width="12" height="13" viewBox="0 0 12 13"><path d="M0.5 0.5V12.5L11.5 6.5Z" fill="#a6a6a6"/></svg>
<svg style="position:absolute;left:978px;top:542px;" width="17" height="17" viewBox="0 0 17 17"><rect x="0" y="0" width="17" height="4.5" fill="#f4c57a"/><rect x="0" y="6" width="17" height="4.5" fill="#f4c57a"/><rect x="0" y="12" width="17" height="4.5" fill="#f4c57a"/></svg>
<svg style="position:absolute;left:976px;top:571.5px;" width="22" height="20" viewBox="0 0 22 20"><circle cx="11" cy="10" r="9.8" fill="#f4c57a"/><text x="6" y="16" font-family="Liberation Sans" font-size="16" fill="#5a4a2a">p</text></svg>
<svg style="position:absolute;left:976px;top:601.5px;" width="22" height="20" viewBox="0 0 22 20"><circle cx="11" cy="10" r="9.8" fill="#f4c57a"/><text x="6" y="16" font-family="Liberation Sans" font-size="16" fill="#5a4a2a">p</text></svg>
<div class="t" style="left:1004.00px;top:542.31px;font-size:19px;line-height:19px;color:#000;transform:scaleX(0.9246);transform-origin:0 0;"><span style="color:#871a1a">this</span><span style="color:#000"> = </span><span style="color:#7f7f7f">{HelloServlet@14244}</span></div>
<div class="t" style="left:1004.00px;top:572.11px;font-size:19px;line-height:19px;color:#000;transform:scaleX(0.9089);transform-origin:0 0;"><span style="color:#871a1a">request</span><span style="color:#000"> = </span><span style="color:#7f7f7f">{RequestFacade@14245}</span></div>
<div class="t" style="left:1004.00px;top:601.91px;font-size:19px;line-height:19px;color:#000;transform:scaleX(0.9072);transform-origin:0 0;"><span style="color:#871a1a">response</span><span style="color:#000"> = </span><span style="color:#7f7f7f">{ResponseFacade@14246}</span></div>
<svg style="position:absolute;left:36px;top:455px;" width="40" height="75" viewBox="36 455 40 75"><path d="M53.4 483A7.9 7.9 0 0 1 53.4 467.4H58" fill="none" stroke="#59a869" stroke-width="3.2"/><path d="M57 462.6L65 468.4L57 474.2Z" fill="#59a869"/><rect x="55.6" y="476" width="7.4" height="7.3" fill="#606060" stroke="#f2f2f2" stroke-width="0.8"/><circle cx="57" cy="510.1" r="8.7" fill="#c4c4c4"/><rect x="55.2" y="504.5" width="3" height="5.5" fill="#f2f2f2"/><path d="M56.7 510V513.5L52 516.5" fill="none" stroke="#f2f2f2" stroke-width="2.6"/><path d="M43.3 508L53.4 514.8L43.3 522Z" fill="#c4c4c4" stroke="#f2f2f2" stroke-width="1.4" paint-order="stroke"/><path d="M43.3 508L53.4 514.8L43.3 522Z" fill="#c4c4c4"/></svg>
<div style="left:39px;top:537px;width:30px;height:2px;background:#d5d5d5;"></div>
<svg style="position:absolute;left:41px;top:552px;" width="28" height="25" viewBox="0 0 28 25"><ellipse cx="12" cy="10" rx="11" ry="7.5" fill="#6e6e6e"/><circle cx="12" cy="10" r="4.6" fill="#f2f2f2"/><circle cx="12" cy="10" r="2.6" fill="#6e6e6e"/><path d="M19 19H27L23 24Z" fill="#3d3d3d"/></svg>
<div style="left:39px;top:586px;width:30px;height:2px;background:#d5d5d5;"></div>
<svg style="position:absolute;left:44px;top:601px;" width="20" height="20" viewBox="0 0 20 20"><rect x="1" y="1" width="4" height="18" fill="#59a869"/><path d="M7 1L19 10L7 19Z" fill="#59a869"/></svg>
<div style="left:48px;top:641px;width:4.5px;height:16.5px;background:#c4c4c4;"></div>
<div style="left:55.5px;top:641px;width:4.5px;height:16.5px;background:#c4c4c4;"></div>
<div style="left:46px;top:681px;width:16px;height:16px;background:#db5860;"></div>
<div style="left:39px;top:714px;width:30px;height:2px;background:#d5d5d5;"></div>
<svg style="position:absolute;left:44px;top:727px;" width="22" height="21" viewBox="0 0 22 21"><circle cx="14" cy="7.5" r="7" fill="#db5860" stroke="#f2f2f2" stroke-width="0"/><circle cx="7.5" cy="13" r="7" fill="#db5860" stroke="#f2f2f2" stroke-width="1.6"/></svg>
<svg style="position:absolute;left:44px;top:768px;" width="20" height="19" viewBox="0 0 20 19"><circle cx="11" cy="8.5" r="8" fill="#db5860"/><path d="M1 18L18 1" stroke="#f2f2f2" stroke-width="4"/><path d="M1 18L18 1" stroke="#6e6e6e" stroke-width="2"/></svg>
<div style="left:39px;top:802px;width:30px;height:2px;background:#d5d5d5;"></div>
<svg style="position:absolute;left:43px;top:817px;" width="22" height="20" viewBox="0 0 22 20"><path d="M0 5H5L7 1H15L17 5H22V20H0Z" fill="#6e6e6e"/><circle cx="11" cy="12" r="5" fill="#f2f2f2"/><circle cx="11" cy="12" r="3" fill="#6e6e6e"/></svg>
<div style="left:39px;top:852px;width:30px;height:2px;background:#d5d5d5;"></div>
<svg style="position:absolute;left:45px;top:866px;" width="20" height="20" viewBox="0 0 20 20"><circle cx="10" cy="10" r="7.2" fill="#6e6e6e"/><rect x="7.7" y="0" width="4.6" height="6" rx="0.6" fill="#6e6e6e" transform="rotate(0 10 10)"/><rect x="7.7" y="0" width="4.6" height="6" rx="0.6" fill="#6e6e6e" transform="rotate(60 10 10)"/><rect x="7.7" y="0" width="4.6" height="6" rx="0.6" fill="#6e6e6e" transform="rotate(120 10 10)"/><rect x="7.7" y="0" width="4.6" height="6" rx="0.6" fill="#6e6e6e" transform="rotate(180 10 10)"/><rect x="7.7" y="0" width="4.6" height="6" rx="0.6" fill="#6e6e6e" transform="rotate(240 10 10)"/><rect x="7.7" y="0" width="4.6" height="6" rx="0.6" fill="#6e6e6e" transform="rotate(300 10 10)"/><circle cx="10" cy="10" r="3.2" fill="#f2f2f2"/></svg>
<svg style="position:absolute;left:58px;top:882px;" width="10" height="8" viewBox="0 0 10 8"><path d="M0 0H9L4.5 6Z" fill="#3d3d3d"/></svg>
<div style="left:39px;top:900px;width:30px;height:2px;background:#d5d5d5;"></div>
<svg style="position:absolute;left:43px;top:915px;" width="22" height="22" viewBox="0 0 22 22"><path d="M11 2L20 11L17 12L12 17L11 20L2 11L5 10L10 5Z" fill="#6e6e6e"/><path d="M7 15L0 22" stroke="#6e6e6e" stroke-width="2.5"/></svg>
<div style="left:0px;top:971px;width:1920px;height:32px;background:#f2f2f2;"></div>
<div style="left:288px;top:971px;width:117px;height:32px;background:#bebebe;"></div>
<svg style="position:absolute;left:48px;top:981px;" width="17" height="14" viewBox="0 0 17 14"><rect x="0" y="0" width="3" height="3" fill="#6e6e6e"/><rect x="5" y="0" width="11" height="2.6" fill="#6e6e6e"/><rect x="0" y="5.5" width="3" height="3" fill="#6e6e6e"/><rect x="5" y="5.5" width="11" height="2.6" fill="#6e6e6e"/><rect x="0" y="11" width="3" height="3" fill="#6e6e6e"/><rect x="5" y="11" width="11" height="2.6" fill="#6e6e6e"/></svg>
<div class="t" style="left:72.00px;top:980.91px;font-size:19px;line-height:19px;color:#000;transform:scaleX(0.7767);transform-origin:0 0;">6: TODO</div>
<div style="left:71.0px;top:997.9px;width:8.2px;height:1.2px;background:#000;"></div>
<svg style="position:absolute;left:164px;top:981px;" width="17" height="14" viewBox="0 0 17 14"><rect x="0" y="0" width="16" height="2.8" fill="#6e6e6e"/><rect x="0" y="5.5" width="10" height="2.8" fill="#6e6e6e"/><rect x="0" y="11" width="13" height="2.8" fill="#6e6e6e"/></svg>
<div class="t" style="left:189.00px;top:980.91px;font-size:19px;line-height:19px;color:#000;transform:scaleX(0.7706);transform-origin:0 0;">0: Messages</div>
<div style="left:188.0px;top:997.9px;width:8.1px;height:1.2px;background:#000;"></div>
<svg style="position:absolute;left:296px;top:972px;" width="32" height="31" viewBox="0 0 32 31"><g fill="#6e6e6e"><path d="M13.5 8.7L16.5 11.5L19.5 8.7" fill="none" stroke="#6e6e6e" stroke-width="2.1"/><ellipse cx="16.5" cy="18" rx="4.9" ry="6.8"/><rect x="9" y="13.2" width="4.5" height="2"/><rect x="9" y="17.1" width="4.5" height="2"/><rect x="9" y="21.2" width="4.5" height="2"/><rect x="19.5" y="13.2" width="4.3" height="2"/><rect x="19.5" y="17.1" width="4.3" height="2"/><rect x="19.5" y="21.2" width="4.3" height="2"/></g><circle cx="23.4" cy="24.1" r="3" fill="#00e000" stroke="#2a8a2a" stroke-width="0.9"/></svg>
<div class="t" style="left:328.75px;top:980.91px;font-size:19px;line-height:19px;color:#000;transform:scaleX(0.8007);transform-origin:0 0;">5: Debug</div>
<div style="left:327.8px;top:997.9px;width:8.5px;height:1.2px;background:#000;"></div>
<svg style="position:absolute;left:419px;top:980px;" width="19" height="19" viewBox="0 0 19 19"><path d="M2 6L7 1L10 4L8 6L18 16L16 18L6 8L4 10Z" fill="#6e6e6e"/></svg>
<div class="t" style="left:446.00px;top:980.91px;font-size:19px;line-height:19px;color:#000;transform:scaleX(0.8094);transform-origin:0 0;">Build</div>
<svg style="position:absolute;left:511px;top:980px;" width="21" height="20" viewBox="0 0 21 20"><rect x="0" y="0" width="16" height="16" fill="#6e6e6e"/><rect x="2" y="3" width="12" height="11" fill="#f2f2f2"/><rect x="6" y="6" width="15" height="14" fill="#6e6e6e" stroke="#f2f2f2" stroke-width="1.5"/><text x="7.5" y="18" font-family="Liberation Sans" font-size="9" font-weight="bold" fill="#f2f2f2">EE</text></svg>
<div class="t" style="left:537.00px;top:980.91px;font-size:19px;line-height:19px;color:#000;transform:scaleX(0.7848);transform-origin:0 0;">Java Enterprise</div>
<svg style="position:absolute;left:1779px;top:978px;" width="22" height="22" viewBox="0 0 22 22"><path d="M11 20H20V11A9 9 0 1 0 11 20Z" fill="none" stroke="#6e6e6e" stroke-width="2"/></svg>
<div class="t" style="left:1806.00px;top:980.91px;font-size:19px;line-height:19px;color:#000;transform:scaleX(0.7919);transform-origin:0 0;">Event Log</div>
<div style="left:0px;top:1004px;width:1920px;height:30px;background:#f2f2f2;"></div>
<svg style="position:absolute;left:8px;top:1010px;" width="20" height="19" viewBox="0 0 20 19"><rect x="5" y="1" width="14" height="13" fill="none" stroke="#6e6e6e" stroke-width="1.4"/><path d="M1 5V18H14" fill="none" stroke="#6e6e6e" stroke-width="1.4"/></svg>
<div class="t" style="left:42.00px;top:1009.91px;font-size:19px;line-height:19px;color:#000;transform:scaleX(0.9319);transform-origin:0 0;">Build completed successfully in 2 s 680 ms (2 minutes ago)</div>
<div class="t" style="left:1518.75px;top:1010.11px;font-size:19px;line-height:19px;color:#000;transform:scaleX(0.8722);transform-origin:0 0;">17:2</div>
<div class="t" style="left:1571.00px;top:1010.11px;font-size:19px;line-height:19px;color:#000;transform:scaleX(0.7761);transform-origin:0 0;">CRLF</div>
<div class="t" style="left:1628.00px;top:1010.11px;font-size:19px;line-height:19px;color:#000;transform:scaleX(0.8639);transform-origin:0 0;">UTF-8</div>
<svg style="position:absolute;left:1689px;top:1010px;" width="19" height="18" viewBox="0 0 19 18"><path d="M2 9V5A4 4 0 0 1 10 5" fill="none" stroke="#6e6e6e" stroke-width="2"/><rect x="6" y="9" width="12" height="9" fill="#6e6e6e"/></svg>
<svg style="position:absolute;left:1725px;top:1006px;" width="24" height="26" viewBox="0 0 24 26"><path d="M5 9.5V7A7 5 0 0 1 19 7V9.5Z" fill="#6e6e6e"/><rect x="2.5" y="9.5" width="19" height="2" fill="#6e6e6e"/><circle cx="12" cy="16" r="5" fill="#f2f2f2" stroke="#6e6e6e" stroke-width="1.8"/><circle cx="10" cy="15.5" r="0.9" fill="#6e6e6e"/><circle cx="14" cy="15.5" r="0.9" fill="#6e6e6e"/><path d="M10 18Q12 19.5 14 18" fill="none" stroke="#6e6e6e" stroke-width="1"/><path d="M3.5 23.5L8 20.5H16L20.5 23.5Z" fill="#6e6e6e"/></svg>
<div class="t" style="left:1763.75px;top:1010.11px;font-size:19px;line-height:19px;color:#000;transform:scaleX(0.8844);transform-origin:0 0;">4 spaces</div>
<svg style="position:absolute;left:1844px;top:1005.5px;" width="28" height="27" viewBox="0 0 28 27"><path d="M7 19A5.5 5.5 0 0 1 6 8A8 8 0 0 1 20 6.5A5.5 5.5 0 0 1 23 16.5L7 19Z" fill="#6e6e6e"/><path d="M10.5 9.5A3 3 0 1 1 14.5 12C13.5 12.7 13 13.3 13 14.5" fill="none" stroke="#f2f2f2" stroke-width="1.9"/><rect x="12" y="15.5" width="2" height="2" fill="#f2f2f2"/><circle cx="21.5" cy="23" r="6.2" fill="#f2f2f2"/><rect x="20.4" y="17.2" width="2.2" height="11.6" rx="0.4" fill="#6e6e6e" transform="rotate(0 21.5 23)"/><rect x="20.4" y="17.2" width="2.2" height="11.6" rx="0.4" fill="#6e6e6e" transform="rotate(60 21.5 23)"/><rect x="20.4" y="17.2" width="2.2" height="11.6" rx="0.4" fill="#6e6e6e" transform="rotate(120 21.5 23)"/><circle cx="21.5" cy="23" r="4" fill="#6e6e6e"/><circle cx="21.5" cy="23" r="1.7" fill="#f2f2f2"/></svg>
<svg style="position:absolute;left:1885px;top:1010px;" width="19" height="19" viewBox="0 0 19 19"><circle cx="9.5" cy="9.5" r="9.3" fill="#db5860"/><rect x="8" y="3.5" width="3" height="8" fill="#fff"/><rect x="8" y="13" width="3" height="3" fill="#fff"/></svg>
<svg style="position:absolute;left:1892px;top:98.5px;" width="33" height="27" viewBox="0 0 33 27"><g transform="translate(4,4)"><text x="0" y="13.00" font-family="Liberation Sans" font-style="italic" font-weight="bold" font-size="24.16" fill="#6e6e6e" transform="translate(0.0,0) scale(0.884,1) skewX(0)" >m</text></g></svg>
<div class="t" style="left:1911.04px;top:126.40px;font-size:16.7px;line-height:16.7px;color:#000;transform-origin:0 0;transform:rotate(90deg) scaleX(0.9258);">Maven</div>
<svg style="position:absolute;left:1896px;top:201px;" width="18" height="19" viewBox="0 0 18 19"><ellipse cx="9" cy="3.5" rx="8" ry="3" fill="#6e6e6e"/><path d="M1 6C1 10 17 10 17 6V9C17 13 1 13 1 9Z" fill="#6e6e6e"/><path d="M1 11C1 15 17 15 17 11V15C17 19 1 19 1 15Z" fill="#6e6e6e"/></svg>
<div class="t" style="left:1911.04px;top:228.60px;font-size:16.7px;line-height:16.7px;color:#000;transform-origin:0 0;transform:rotate(90deg) scaleX(0.8756);">Database</div>
<svg style="position:absolute;left:1896px;top:323px;" width="18" height="18" viewBox="0 0 18 18"><ellipse cx="9" cy="4" rx="3" ry="3" fill="#6e6e6e"/><ellipse cx="9" cy="11" rx="4" ry="6" fill="#6e6e6e"/><path d="M1 6L5 9M17 6L13 9M0 12H5M18 12H13M1 18L5 14M17 18L13 14" stroke="#6e6e6e" stroke-width="1.5"/></svg>
<div class="t" style="left:1911.04px;top:348.00px;font-size:16.7px;line-height:16.7px;color:#000;transform-origin:0 0;transform:rotate(90deg) scaleX(0.9375);">Ant</div>
<svg style="position:absolute;left:1895px;top:404px;" width="19" height="17" viewBox="0 0 19 17"><path d="M9 1A8 8 0 1 0 15 14" fill="none" stroke="#6e6e6e" stroke-width="0"/><circle cx="8" cy="9" r="7.5" fill="#6e6e6e"/><path d="M4 5L13 13" stroke="#f2f2f2" stroke-width="2"/><path d="M9 10L13 14L19 5" fill="none" stroke="#f2f2f2" stroke-width="3.2"/><path d="M9 10L13 14L19 5" fill="none" stroke="#6e6e6e" stroke-width="1.6"/></svg>
<div class="t" style="left:1911.04px;top:427.00px;font-size:16.7px;line-height:16.7px;color:#000;transform-origin:0 0;transform:rotate(90deg) scaleX(0.9374);">Bean Validation</div>
<svg style="position:absolute;left:1896px;top:568px;" width="20" height="14" viewBox="0 0 20 14"><rect x="0" y="0" width="20" height="14" fill="#6e6e6e"/><text x="1.5" y="11" font-family="Liberation Sans" font-weight="bold" font-size="9.5" fill="#f2f2f2">JSF</text></svg>
<div class="t" style="left:1911.04px;top:590.00px;font-size:16.7px;line-height:16.7px;color:#000;transform-origin:0 0;transform:rotate(90deg) scaleX(0.7982);">JSF</div>
<svg style="position:absolute;left:1896px;top:642px;" width="18" height="17" viewBox="0 0 18 17"><circle cx="9" cy="8.5" r="8.3" fill="#6e6e6e"/><path d="M3 3L15 14" stroke="#f2f2f2" stroke-width="2"/></svg>
<div class="t" style="left:1911.04px;top:666.00px;font-size:16.7px;line-height:16.7px;color:#000;transform-origin:0 0;transform:rotate(90deg) scaleX(0.7998);">CDI</div>
<svg style="position:absolute;left:1896px;top:771px;" width="18" height="17" viewBox="0 0 18 17"><rect x="0" y="0" width="18" height="16" fill="#6e6e6e"/><path d="M3 4L7 7L3 10" fill="none" stroke="#f2f2f2" stroke-width="1.6"/><path d="M8 12H14" stroke="#f2f2f2" stroke-width="1.6"/></svg>
<div class="t" style="left:1911.04px;top:796.00px;font-size:16.7px;line-height:16.7px;color:#000;transform-origin:0 0;transform:rotate(90deg) scaleX(0.9666);">Terminal</div>
<svg style="position:absolute;left:1898px;top:889px;" width="14" height="16" viewBox="0 0 14 16"><path d="M1 1L13 8L1 15Z" fill="#6e6e6e"/></svg>
<div class="t" style="left:1911.04px;top:912.50px;font-size:16.7px;line-height:16.7px;color:#000;transform-origin:0 0;transform:rotate(90deg) scaleX(0.9401);"><u>4</u>: Run</div></body></html>
